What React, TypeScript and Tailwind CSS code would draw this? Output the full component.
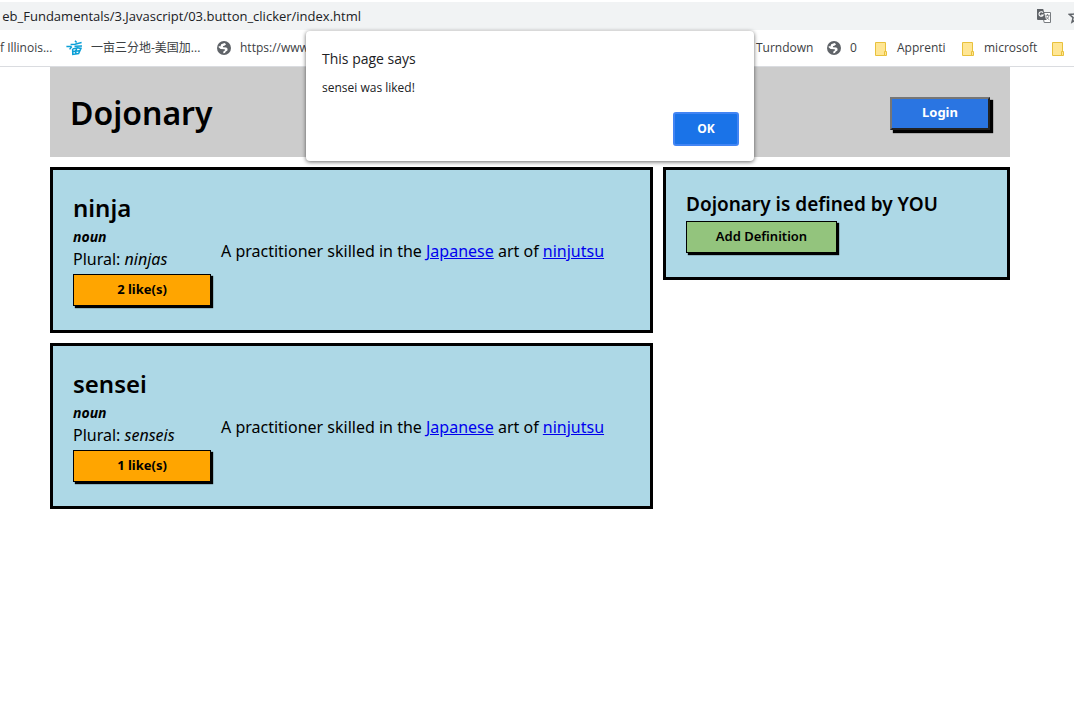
import { useState } from "react";

function GlobeIcon() {
  return (
    <svg viewBox="0 0 14 14" className="size-3.5 shrink-0" aria-hidden="true">
      <circle cx="7" cy="7" r="7" fill="#5f6368" />
      <path
        d="M4.2 3.2 7.6 2.1 9.1 3.3 7.8 4.6 5.9 5.2 6.1 6.3 9.3 6.5 10.6 7.7 10.4 9.4 8.6 10.7 8 12.1 6.2 12.3 6.4 10.6 8.1 9.3 7.7 8.2 3.6 8 1.6 6.2 1.9 4.9 3.4 5.4Z"
        fill="#fff"
      />
    </svg>
  );
}

function FolderIcon() {
  return (
    <svg viewBox="0 0 14 15" className="h-[15px] w-3.5 shrink-0" aria-hidden="true">
      <path d="M1.5 1.5h10v13h-10z" fill="#ffe694" stroke="#e8c13c" />
      <path d="M10.5 14.5v-4h2v4z" fill="#ffe694" stroke="#e8c13c" />
    </svg>
  );
}

function AcreIcon() {
  return (
    <svg viewBox="0 0 17 16" className="h-4 w-[17px] shrink-0" fill="none" stroke="#0a9fd6" strokeWidth="1.5" aria-hidden="true">
      <path d="M9 .8 10.6 2.6M4.6 4.4 9 4.2 15.6 2.6M.4 6.6 5.6 6.4M8.5 6.2 16 6M5.8 6.6 3.6 9.4M6.6 9 6.8 14.4 12.6 13.6 15 8.4 11.5 7.8 6.6 9M10.6 8.2 9.6 13.6M7 11.4 13.4 10.8" />
    </svg>
  );
}

function TranslateIcon() {
  return (
    <svg viewBox="0 0 14 14" className="size-3.5 shrink-0" aria-hidden="true">
      <path d="M5 3.5h8.5v10H7.2z" fill="#fff" stroke="#777b7f" />
      <path d="M0 0h6.2l3 11H1a1 1 0 0 1-1-1z" fill="#5f6368" />
      <path d="M6 3.7A2.2 2.2 0 1 0 6.2 6H4.2" fill="none" stroke="#fff" strokeWidth="1.1" />
      <path d="M8.5 6.3h4M10.5 5v1.3M12 6.5c-.4 2-1.5 3.2-3 4M9.3 7.5c.6 1.5 1.6 2.5 3 3.2" fill="none" stroke="#777b7f" strokeWidth=".9" />
    </svg>
  );
}

function StarIcon() {
  return (
    <svg viewBox="0 0 16 16" className="size-4 shrink-0" fill="none" stroke="#5f6368" strokeWidth="1.5" aria-hidden="true">
      <path d="m8 1.8 1.8 4.3 4.7.4-3.6 3.1L12 14.2 8 11.7l-4 2.5 1.1-4.6-3.6-3.1 4.7-.4z" />
    </svg>
  );
}

function BrowserBar() {
  return (
    <div className="font-['Open_Sans','Noto_Sans_CJK_SC',sans-serif] text-[#3c4043]">
      <div className="mt-0.5 flex h-7 items-center justify-between overflow-hidden bg-[#f1f3f4]">
        <div className="flex w-[361px] justify-end pt-px whitespace-nowrap text-[13px] text-[#202124]">
          eb_Fundamentals/3.Javascript/03.button_clicker/index.html
        </div>
        <div className="-mr-2.5 flex items-center gap-[17px]">
          <TranslateIcon />
          <StarIcon />
        </div>
      </div>
      <nav className="flex h-[37px] items-center justify-between overflow-hidden whitespace-nowrap border-b border-[#dadce0] text-xs">
        <div className="flex items-center">
          <a href="#illinois" className="w-[66px]">f Illinois...</a>
          <a href="#acre" className="flex w-[151px] items-center gap-2">
            <AcreIcon />
            一亩三分地-美国加...
          </a>
          <a href="#site" className="flex items-center gap-[9px]">
            <GlobeIcon />
            https://www.
          </a>
        </div>
        <div className="flex items-center pr-[9px]">
          <a href="#turndown" className="w-[71px]">Turndown</a>
          <a href="#zero" className="flex w-[47px] items-center gap-[9px]">
            <GlobeIcon />0
          </a>
          <a href="#apprenti" className="flex w-[87px] items-center gap-[9px]">
            <FolderIcon />
            Apprenti
          </a>
          <a href="#microsoft" className="flex w-[90px] items-center gap-[9px]">
            <FolderIcon />
            microsoft
          </a>
          <a href="#folder" aria-label="Folder">
            <FolderIcon />
          </a>
        </div>
      </nav>
    </div>
  );
}

function Definition({ word, plural, initialLikes, onLike }: { word: string; plural: string; initialLikes: number; onLike: (word: string) => void }) {
  const [likes, setLikes] = useState(initialLikes);
  return (
    <article className="flex items-center gap-2.5 border-3 border-black bg-[#add8e6] p-5">
      <div className="w-[138px] shrink-0">
        <h2 className="text-2xl leading-9 font-semibold">{word}</h2>
        <p className="text-sm leading-[22px] font-bold italic">noun</p>
        <p className="leading-[22px]">
          Plural: <em>{plural}</em>
        </p>
        <button
          type="button"
          onClick={() => {
            setLikes(likes + 1);
            onLike(word);
          }}
          className="mt-1 mb-1 block h-8 w-full border border-black bg-[#ffa500] text-[13px] font-bold shadow-[2px_2px_1px_#000]"
        >
          {likes} like(s)
        </button>
      </div>
      <p className="pt-0.5">
        A practitioner skilled in the{" "}
        <a href="#japanese" className="text-[#0000ee] underline">Japanese</a> art of{" "}
        <a href="#ninjutsu" className="text-[#0000ee] underline">ninjutsu</a>
      </p>
    </article>
  );
}

export default function App() {
  const [message, setMessage] = useState("sensei was liked!");
  return (
    <div className="relative min-h-screen overflow-x-hidden bg-white">
      <BrowserBar />
      <div className="mr-16 ml-[50px] font-['Comic_Sans_MS','Noto_Sans',sans-serif] text-base text-black">
        <header className="flex items-center justify-between bg-[#cccccc] px-5 pt-[22px] pb-5">
          <h1 className="text-[32px] leading-[48px] font-semibold">Dojonary</h1>
          <button
            type="button"
            className="h-[33px] w-[100px] border-2 border-t-[#767676] border-r-[#222222] border-b-[#222222] border-l-[#767676] bg-[#2a75e2] text-[13px] font-bold text-white shadow-[3px_3px_1px_#000]"
          >
            Login
          </button>
        </header>
        <main className="mt-2.5 flex items-start gap-2.5">
          <section className="flex min-w-0 flex-1 flex-col gap-2.5">
            <Definition word="ninja" plural="ninjas" initialLikes={2} onLike={(w) => setMessage(`${w} was liked!`)} />
            <Definition word="sensei" plural="senseis" initialLikes={1} onLike={(w) => setMessage(`${w} was liked!`)} />
          </section>
          <aside className="w-[347px] shrink-0 border-3 border-black bg-[#add8e6] p-5">
            <h3 className="text-[19px] leading-7 font-semibold">Dojonary is defined by YOU</h3>
            <button type="button" className="mt-[3px] mb-1 block h-8 w-[151px] border border-black bg-[#93c47d] text-[13px] font-semibold shadow-[2px_2px_1px_#000]">
              Add Definition
            </button>
          </aside>
        </main>
      </div>
      {message && (
        <div className="pointer-events-none absolute top-[31px] right-16 left-[50px] flex justify-center">
          <div
            role="alertdialog"
            aria-labelledby="alert-title"
            className="pointer-events-auto flex w-[448px] flex-col rounded bg-white px-4 pt-4 pb-[15px] font-['Open_Sans',sans-serif] text-[#202124] shadow-[0_1px_4px_rgba(0,0,0,0.6)]"
          >
            <h2 id="alert-title" className="text-sm leading-6">This page says</h2>
            <p className="mt-2 text-xs leading-[17px]">{message}</p>
            <button
              type="button"
              onClick={() => setMessage("")}
              className="mt-4 -mr-px h-[34px] w-[66px] self-end rounded-[3px] border-2 border-[#4285f4] bg-[#1a73e8] text-xs font-bold text-white"
            >
              OK
            </button>
          </div>
        </div>
      )}
    </div>
  );
}
